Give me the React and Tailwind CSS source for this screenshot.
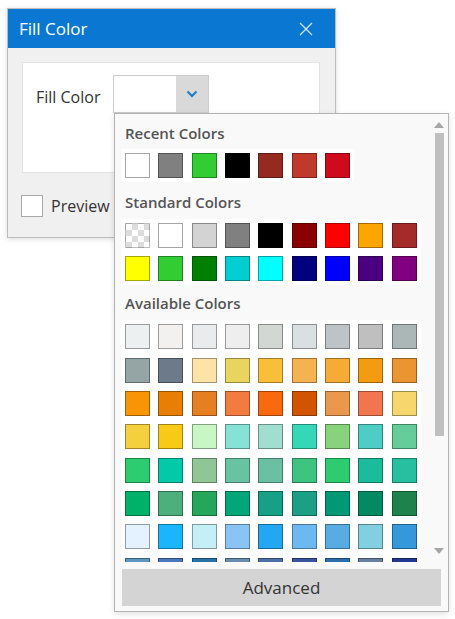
import React from "react";

const FONT = { fontFamily: '"Open Sans", "Noto Sans", sans-serif' };

const recent = ["#ffffff", "#808080", "#32cd32", "#000000", "#952b20", "#c0392b", "#cf0a1c"];

const standard = [
  "transparent", "#ffffff", "#d3d3d3", "#808080", "#000000", "#8b0000", "#ff0000", "#ffa500", "#a52a2a",
  "#ffff00", "#32cd32", "#008000", "#00ced1", "#00ffff", "#000080", "#0000ff", "#4b0082", "#800080",
];

const available = [
  "#ecf0f1", "#f2f1ef", "#eaebec", "#eeeeee", "#d2d7d3", "#dadfe1", "#bdc3c7", "#bfbfbf", "#abb7b7",
  "#95a5a6", "#6c7a89", "#fde3a7", "#e9d460", "#f9bf3b", "#f4b350", "#f5ab35", "#f39c12", "#eb9532",
  "#f89406", "#e87e04", "#e67e22", "#f27b3f", "#f9690e", "#d35400", "#eb974e", "#f1764f", "#f5d76e",
  "#f4d03f", "#f7ca18", "#c8f7c5", "#86e2d5", "#a2ded0", "#36d7b7", "#87d37c", "#4ecdc4", "#66cc99",
  "#2ecc71", "#03c9a9", "#90c695", "#68c3a3", "#6bbfa3", "#3fc380", "#2ecc71", "#1bbc9b", "#26c0a0",
  "#00b16a", "#4daf7c", "#26a65b", "#03a678", "#16a085", "#1ba085", "#019875", "#048a62", "#1e824c",
  "#e4f1fe", "#19b5fe", "#c5eff7", "#89c4f4", "#22a7f0", "#6bb9f0", "#59abe3", "#81cfe0", "#3498db",
  "#5c97bf", "#4b77be", "#2574a9", "#6a8caf", "#4d6fa8", "#3a539b", "#2c6eaa", "#67809f", "#1f3a93",
];

function Swatch({ color }) {
  if (color === "transparent") {
    return (
      <div className="w-[25px] h-[25px] border border-black/25 [background:repeating-conic-gradient(#dcdcdc_0%_25%,#ffffff_0%_50%)_0_0/12px_12px]" />
    );
  }
  return (
    <div
      className="w-[25px] h-[25px] border border-black/35"
      style={{ backgroundColor: color }}
    />
  );
}

function SwatchGrid({ colors, short }) {
  const cols = short ? "grid-cols-[repeat(7,25px)]" : "grid-cols-[repeat(9,25px)]";
  return (
    <div className={`grid ${cols} gap-[8.33px] bg-white shadow-[0_0_0_4px_#ffffff] w-max`}>
      {colors.map((c, i) => (
        <Swatch key={i} color={c} />
      ))}
    </div>
  );
}

function SectionTitle({ children }) {
  return (
    <div className="h-[20px] leading-[20px] text-[15px] font-semibold text-[#555555]">
      {children}
    </div>
  );
}

function Chevron() {
  return (
    <svg width="12" height="8" viewBox="0 0 12 8">
      <path d="M1.5 1.5 L6 6 L10.5 1.5" fill="none" stroke="#1f78c8" strokeWidth="2" />
    </svg>
  );
}

function ColorPopup() {
  return (
    <div className="absolute left-[114px] top-[113px] w-[335px] h-[499px] border border-[#b3b3b3] bg-[#f9f9f9] shadow-[0_2px_6px_rgba(0,0,0,0.12)] flex flex-col">
      <div className="h-[448px] flex">
        <div className="flex-1 overflow-hidden pl-[10px] pt-[9px]">
          <SectionTitle>Recent Colors</SectionTitle>
          <div className="mt-[10px]">
            <SwatchGrid colors={recent} short />
          </div>
          <div className="mt-[14px]">
            <SectionTitle>Standard Colors</SectionTitle>
          </div>
          <div className="mt-[11px]">
            <SwatchGrid colors={standard} />
          </div>
          <div className="mt-[12px]">
            <SectionTitle>Available Colors</SectionTitle>
          </div>
          <div className="mt-[11px]">
            <SwatchGrid colors={available} />
          </div>
        </div>
        {/* vertical scrollbar */}
        <div className="w-[16px] flex flex-col items-center pt-[8px] pb-[8px] pr-[2px]">
          <div className="w-0 h-0 border-x-[5px] border-x-transparent border-b-[6px] border-b-[#a6a6a6]" />
          <div className="mt-[5px] w-[9px] h-[303px] bg-[#bfbfbf]" />
          <div className="flex-1" />
          <div className="w-0 h-0 border-x-[5px] border-x-transparent border-t-[6px] border-t-[#a6a6a6]" />
        </div>
      </div>
      <button className="mt-[7px] mx-[7px] h-[37px] bg-[#d4d4d4] text-[17px] text-[#333333] flex items-center justify-center">
        Advanced
      </button>
    </div>
  );
}

export default function App() {
  return (
    <div className="relative w-[455px] h-[619px] bg-white overflow-hidden" style={FONT}>
      <div className="ml-[7px] pt-[8px]">
        <div className="w-[329px] h-[230px] border border-[#bdbdbd] bg-[#f0f0f0] shadow-[0_1px_5px_rgba(0,0,0,0.15)] flex flex-col">
          <div className="h-[39px] bg-[#0a78d2] flex items-center justify-between pl-[11px] pr-[22px]">
            <span className="text-[17px] text-white">Fill Color</span>
            <svg width="14" height="14" viewBox="0 0 14 14">
              <path d="M1 1 L13 13 M13 1 L1 13" stroke="#d3e6f7" strokeWidth="1.2" fill="none" />
            </svg>
          </div>
          <div className="pl-[14px] pt-[14px]">
            <div className="w-[298px] h-[111px] bg-white border border-[#e3e3e3] pl-[13px] pt-[12px]">
              <div className="flex items-center">
                <span className="w-[77px] pt-[6px] text-[16px] text-[#333333]">Fill Color</span>
                <div className="flex h-[38px] border border-[#cccccc]">
                  <div className="w-[62px] bg-white" />
                  <div className="w-[32px] bg-[#d9d9d9] flex items-center justify-center">
                    <Chevron />
                  </div>
                </div>
              </div>
              <div className="ml-[88px] mt-[12px] w-[80px] h-[35px] border border-[#d0d0d0] bg-[#ebebeb]" />
            </div>
          </div>
          <div className="flex items-center pl-[13px] mt-[21px]">
            <div className="w-[22px] h-[22px] border border-[#a8a8a8] bg-white" />
            <span className="ml-[8px] text-[16px] text-[#333333]">Preview</span>
          </div>
        </div>
      </div>
      <ColorPopup />
    </div>
  );
}
